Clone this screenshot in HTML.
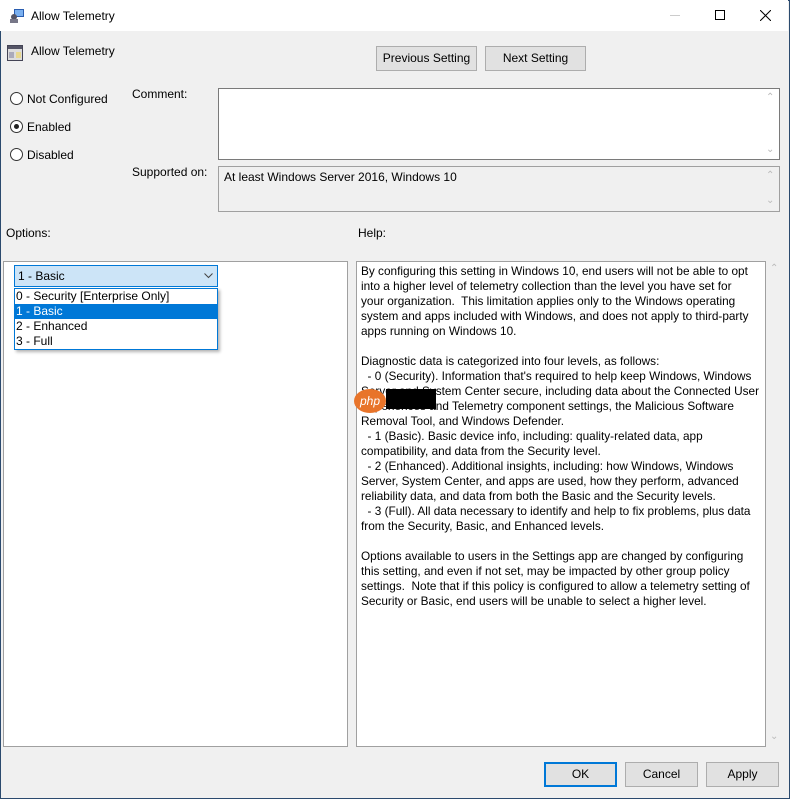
<!DOCTYPE html>
<html><head><style>
*{margin:0;padding:0;box-sizing:border-box}
body{width:790px;height:799px;background:#f0f0f0;font-family:"Liberation Sans",sans-serif;font-size:12px;color:#000;position:relative;overflow:hidden}
.win{position:absolute;left:0;top:0;width:790px;height:799px;border:1px solid #2b4a6e}
.title{position:absolute;left:0;top:0;width:788px;height:31px;background:#fff}
.abs{position:absolute;white-space:nowrap}
.btn{position:absolute;background:#e1e1e1;border:1px solid #adadad;text-align:center;line-height:23px;font-size:12px}
.box{position:absolute;border:1px solid #828790;background:#fff}
.radio{position:absolute;width:13px;height:13px;border:1px solid #333;border-radius:50%;background:#fff}
.help div{height:15px;white-space:pre}
</style></head><body>
<div class="win"></div>
<div class="title">
 <svg class="abs" style="left:9px;top:8px" width="16" height="16"><rect x="5" y="1" width="10" height="8" fill="#2a5db0"/><rect x="6" y="2" width="8" height="6" fill="#7ab0f0"/><circle cx="5" cy="9" r="3" fill="#556"/><rect x="1" y="11" width="8" height="4" fill="#778"/></svg>
 <div class="abs" style="left:31px;top:9px">Allow Telemetry</div>
 <div class="abs" style="left:110px;top:15px;left:670px;width:10px;height:1px;background:#ccc"></div>
 <div class="abs" style="left:715px;top:10px;width:10px;height:10px;border:1px solid #000"></div>
 <svg class="abs" style="left:760px;top:10px" width="11" height="11"><path d="M0 0L11 11M11 0L0 11" stroke="#000" stroke-width="1"/></svg>
</div>
<svg class="abs" style="left:7px;top:45px" width="16" height="16"><rect x="0.5" y="0.5" width="15" height="15" fill="#ddd" stroke="#445"/><rect x="1" y="1" width="14" height="3" fill="#556"/><rect x="2" y="7" width="5" height="6" fill="#aab"/><rect x="9" y="7" width="5" height="6" fill="#e8d890"/></svg>
<div class="abs" style="left:31px;top:44px">Allow Telemetry</div>
<div class="btn" style="left:376px;top:46px;width:101px;height:25px">Previous Setting</div>
<div class="btn" style="left:485px;top:46px;width:101px;height:25px">Next Setting</div>

<div class="radio" style="left:10px;top:92px"></div><div class="abs" style="left:27px;top:92px">Not Configured</div>
<div class="radio" style="left:10px;top:120px"><div style="position:absolute;left:3px;top:3px;width:5px;height:5px;border-radius:50%;background:#222"></div></div><div class="abs" style="left:27px;top:120px">Enabled</div>
<div class="radio" style="left:10px;top:148px"></div><div class="abs" style="left:27px;top:148px">Disabled</div>

<div class="abs" style="left:132px;top:87px">Comment:</div>
<div class="box" style="left:218px;top:88px;width:562px;height:72px;border-color:#7a7a7a"></div>
<div class="abs" style="left:766px;top:92px;color:#bbb;font-size:10px">&#8963;</div>
<div class="abs" style="left:766px;top:144px;color:#bbb;font-size:10px">&#8964;</div>
<div class="abs" style="left:132px;top:165px">Supported on:</div>
<div class="box" style="left:218px;top:166px;width:562px;height:46px;background:#f0f0f0;border-color:#a0a0a0"></div>
<div class="abs" style="left:224px;top:170px">At least Windows Server 2016, Windows 10</div>
<div class="abs" style="left:766px;top:170px;color:#bbb;font-size:10px">&#8963;</div>
<div class="abs" style="left:766px;top:195px;color:#bbb;font-size:10px">&#8964;</div>

<div class="abs" style="left:6px;top:226px">Options:</div>
<div class="abs" style="left:358px;top:226px">Help:</div>

<div class="box" style="left:3px;top:261px;width:345px;height:486px;border-color:#a0a0a0"></div>
<div class="abs" style="left:14px;top:265px;width:204px;height:22px;background:#cce4f7;border:1px solid #0078d7"></div>
<div class="abs" style="left:18px;top:269px">1 - Basic</div>
<svg class="abs" style="left:204px;top:273px" width="9" height="6"><path d="M0.5 0.5L4.5 4.5L8.5 0.5" fill="none" stroke="#444"/></svg>
<div class="abs" style="left:14px;top:288px;width:204px;height:62px;background:#fff;border:1px solid #0078d7;box-shadow:2px 2px 3px rgba(0,0,0,.3)"></div>
<div class="abs" style="left:15px;top:289px;width:202px;height:15px;padding-left:1px;line-height:15px">0 - Security [Enterprise Only]</div>
<div class="abs" style="left:15px;top:304px;width:202px;height:15px;padding-left:1px;line-height:15px;background:#0078d7;color:#fff">1 - Basic</div>
<div class="abs" style="left:15px;top:319px;width:202px;height:15px;padding-left:1px;line-height:15px">2 - Enhanced</div>
<div class="abs" style="left:15px;top:334px;width:202px;height:15px;padding-left:1px;line-height:15px">3 - Full</div>

<div class="box" style="left:356px;top:261px;width:410px;height:486px;border-color:#a0a0a0"></div>
<div class="abs" style="left:770px;top:263px;color:#bbb;font-size:10px">&#8963;</div>
<div class="abs" style="left:770px;top:731px;color:#bbb;font-size:10px">&#8964;</div>
<div class="help abs" style="left:361px;top:264px;font-size:11.8px;line-height:15px">
<div>By configuring this setting in Windows 10, end users will not be able to opt</div>
<div>into a higher level of telemetry collection than the level you have set for</div>
<div>your organization.  This limitation applies only to the Windows operating</div>
<div>system and apps included with Windows, and does not apply to third-party</div>
<div>apps running on Windows 10.</div>
<div> </div>
<div>Diagnostic data is categorized into four levels, as follows:</div>
<div>  - 0 (Security). Information that's required to help keep Windows, Windows</div>
<div>Server and System Center secure, including data about the Connected User</div>
<div>Experiences and Telemetry component settings, the Malicious Software</div>
<div>Removal Tool, and Windows Defender.</div>
<div>  - 1 (Basic). Basic device info, including: quality-related data, app</div>
<div>compatibility, and data from the Security level.</div>
<div>  - 2 (Enhanced). Additional insights, including: how Windows, Windows</div>
<div>Server, System Center, and apps are used, how they perform, advanced</div>
<div>reliability data, and data from both the Basic and the Security levels.</div>
<div>  - 3 (Full). All data necessary to identify and help to fix problems, plus data</div>
<div>from the Security, Basic, and Enhanced levels.</div>
<div> </div>
<div>Options available to users in the Settings app are changed by configuring</div>
<div>this setting, and even if not set, may be impacted by other group policy</div>
<div>settings.  Note that if this policy is configured to allow a telemetry setting of</div>
<div>Security or Basic, end users will be unable to select a higher level.</div>
</div>
<div class="abs" style="left:354px;top:389px;width:32px;height:24px;border-radius:50%;background:#e8742a;color:#fff;font-style:italic;font-size:12px;text-align:center;line-height:24px">php</div>
<div class="abs" style="left:386px;top:389px;width:50px;height:20px;background:#000"></div>

<div class="btn" style="left:544px;top:762px;width:73px;height:25px;border:2px solid #0078d7;line-height:21px">OK</div>
<div class="btn" style="left:625px;top:762px;width:73px;height:25px">Cancel</div>
<div class="btn" style="left:706px;top:762px;width:73px;height:25px">Apply</div>
</body></html>
